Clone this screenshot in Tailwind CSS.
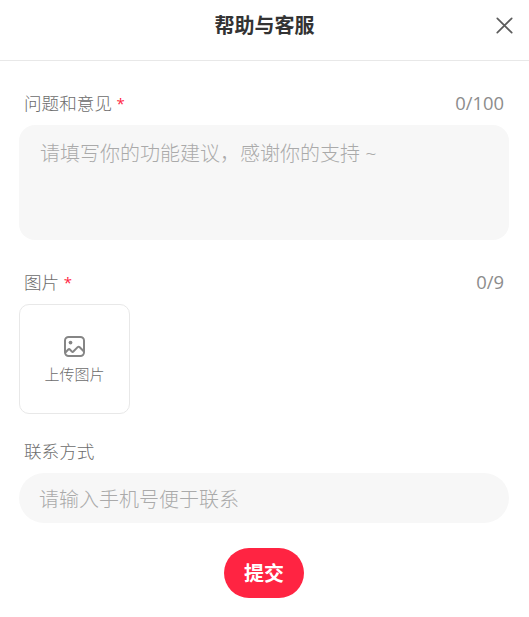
<!DOCTYPE html>
<html lang="zh-CN">

<head>
  <meta charset="UTF-8" />
  <meta name="viewport" content="width=device-width, initial-scale=1.0" />
  <title>帮助与客服</title>
  <script src="https://cdn.jsdelivr.net/npm/@tailwindcss/browser@4"></script>
</head>

<body class="bg-white font-['Open_Sans','Noto_Sans_CJK_SC',sans-serif] font-light text-[#6c6c6c]">

  <!-- Header -->
  <header class="relative flex h-[61px] justify-center border-b border-[#e8e8e8] pt-[11px]">
    <h1 class="text-[20px] leading-[30px] font-bold text-[#333]">帮助与客服</h1>
    <button type="button" aria-label="关闭" class="absolute top-[17px] right-4 size-[17px]">
      <svg class="size-[17px]" viewBox="0 0 17 17" fill="none" stroke="#5c5c5c" stroke-width="1.7" stroke-linecap="round">
        <path d="M1.3 1.3 15.7 15.7M15.7 1.3 1.3 15.7" />
      </svg>
    </button>
  </header>

  <!-- Feedback form -->
  <form class="px-5 pl-[19px] pt-[27px]">

    <div class="flex h-[30px] items-center justify-between px-[5px]">
      <label for="content" class="text-[17.6px] leading-[30px]">问题和意见 <span class="align-[1px] text-[15px] leading-none font-normal text-[#ff2442]">*</span></label>
      <span class="text-[18.4px] leading-[30px] font-normal text-[#8c8c8c]">0/100</span>
    </div>
    <textarea id="content" placeholder="请填写你的功能建议，感谢你的支持 ~"
      class="mt-[7px] block h-[115px] w-full resize-none rounded-2xl bg-[#f7f7f7] px-[21px] pt-[14px] text-[20px] leading-[30px] outline-none placeholder:text-[#aaa]"></textarea>

    <div class="mt-[27px] flex h-[30px] items-center justify-between px-[5px]">
      <span class="text-[17.6px] leading-[30px]">图片 <span class="align-[1px] text-[15px] leading-none font-normal text-[#ff2442]">*</span></span>
      <span class="text-[18.4px] leading-[30px] font-normal text-[#8c8c8c]">0/9</span>
    </div>
    <button type="button"
      class="mt-[7px] flex h-[110px] w-[111px] flex-col items-center rounded-[10px] border border-[#e8e8e8] pt-[30px]">
      <svg class="mr-px size-[23px]" viewBox="0 0 22 22" fill="none" stroke="#858585" stroke-width="1.9" stroke-linejoin="round">
        <rect x="1.9" y="1.9" width="18.2" height="18.2" rx="3.5" />
        <path d="M2.3 16.8 5 13.9Q5.8 13.1 6.6 13.9L8.5 15.9Q9.2 16.6 9.9 15.8L14 11.6Q15 10.7 16 11.7L19.8 15.6" />
        <circle cx="7.2" cy="7.2" r="1.8" fill="#858585" stroke="none" />
      </svg>
      <span class="mt-[5px] text-[15px] leading-[22px]">上传图片</span>
    </button>

    <div class="mt-[22px] flex h-[30px] items-center px-[5px]">
      <label for="contact" class="text-[17.6px] leading-[30px]">联系方式</label>
    </div>
    <input id="contact" type="text" placeholder="请输入手机号便于联系"
      class="mt-[7px] block h-[50px] w-full rounded-full bg-[#f7f7f7] px-5 pt-[2px] text-[20px] outline-none placeholder:text-[#aaa]" />

    <button type="button"
      class="mx-auto mt-[25px] block h-[50px] w-20 rounded-full bg-[#ff2442] pt-[2px] text-[20px] font-bold text-white">提交</button>
  </form>

</body>

</html>
